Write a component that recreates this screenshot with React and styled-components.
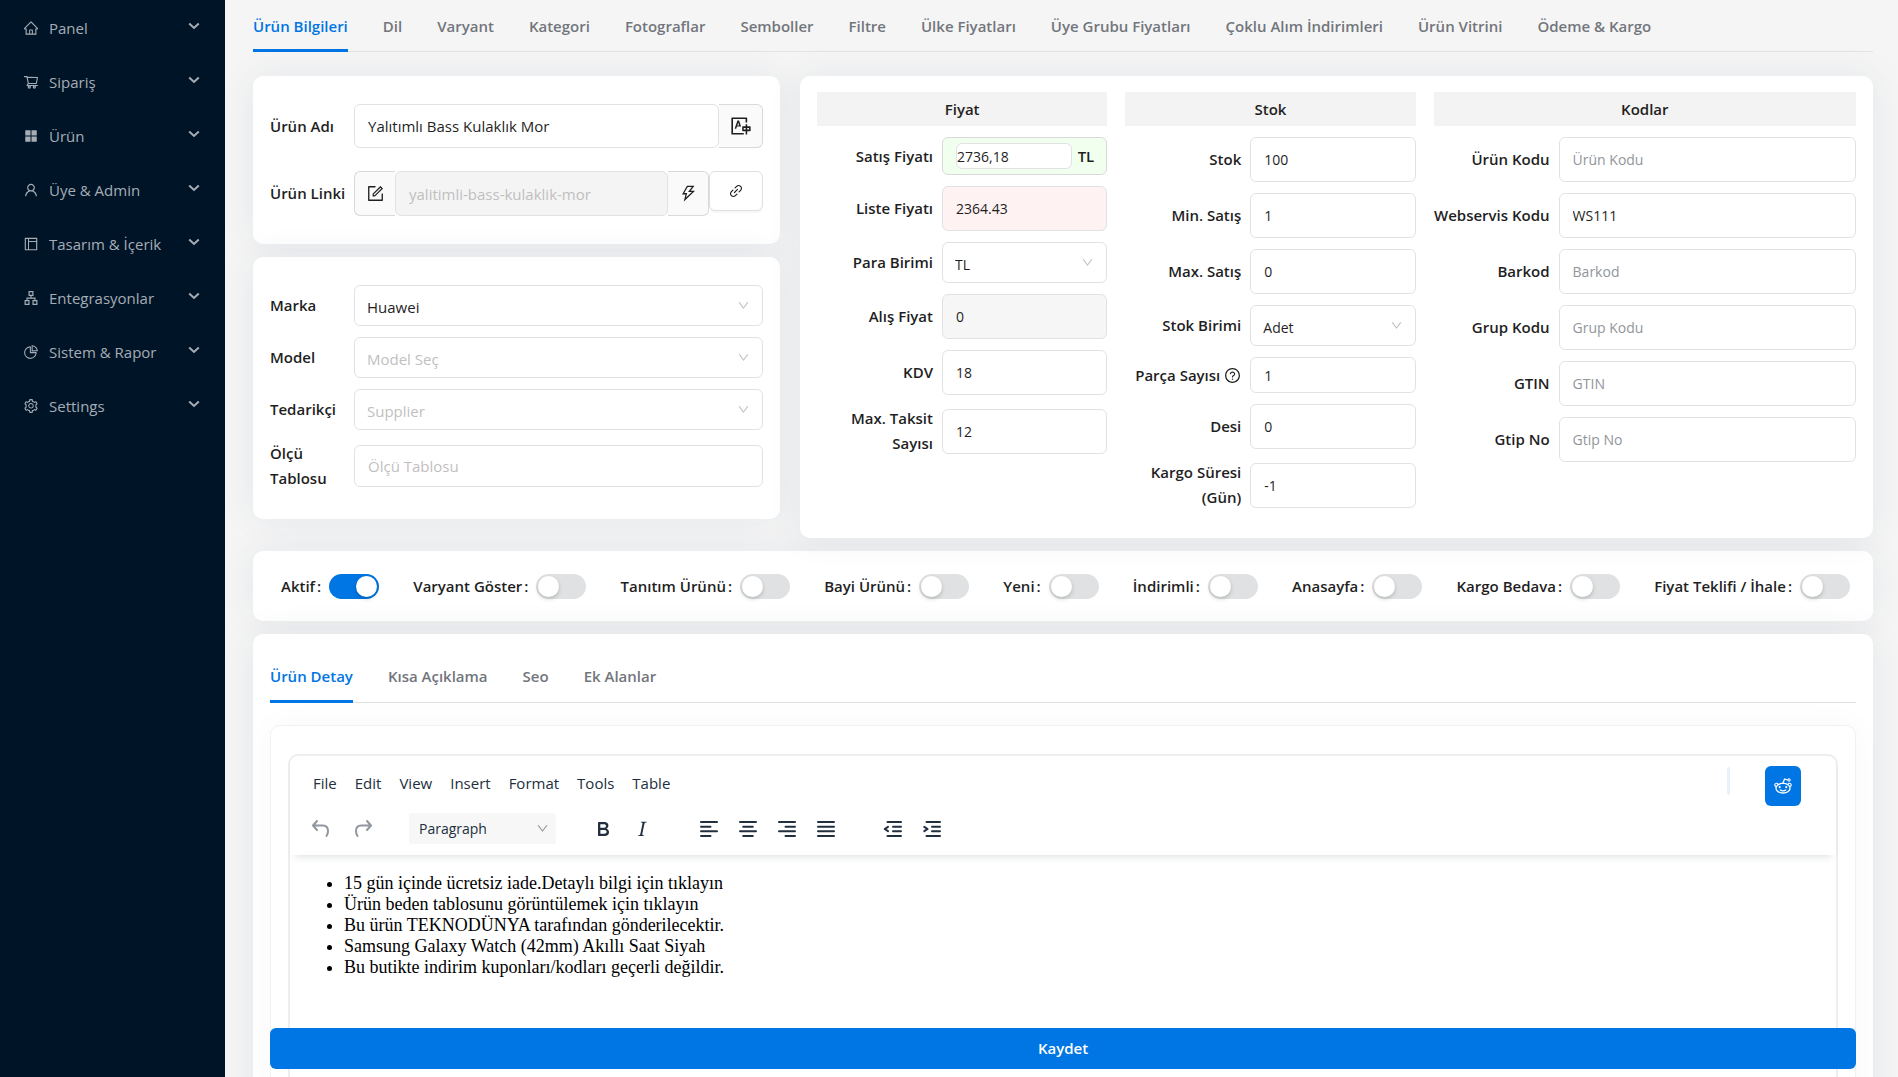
import React, { useState } from "react";
import styled, { createGlobalStyle } from "styled-components";
import {
  AiFillAppstore,
  AiOutlineApartment,
  AiOutlineForm,
  AiOutlineHome,
  AiOutlineLayout,
  AiOutlineLink,
  AiOutlinePieChart,
  AiOutlineQuestionCircle,
  AiOutlineReddit,
  AiOutlineSetting,
  AiOutlineShoppingCart,
  AiOutlineThunderbolt,
  AiOutlineTranslation,
  AiOutlineUser,
  AiOutlineDown,
} from "react-icons/ai";

const GlobalStyle = createGlobalStyle`
  * {
    box-sizing: border-box;
  }

  body {
    margin: 0;
    background: #f5f5f5;
    color: #1f1f1f;
    font-family: "Open Sans", "Noto Sans", sans-serif;
    font-size: 15px;
    line-height: 25px;
  }

  button, input, select {
    font: inherit;
    color: inherit;
    margin: 0;
  }
`

const Page = styled.div`
  display: flex;
  height: 100vh;
`

/* sidebar */

const Sidebar = styled.nav`
  flex: 0 0 225px;
  background: #001428;
`

const SidebarLink = styled.a`
  display: flex;
  align-items: center;
  height: 54px;
  padding: 2px 25px 0 23px;
  color: #a6adb4;
  text-decoration: none;

  > svg:first-child {
    margin-right: 10px;
  }
`

const SidebarText = styled.span`
  flex: 1;
`

const sidebarItems = [
  { text: 'Panel', Icon: AiOutlineHome },
  { text: 'Sipariş', Icon: AiOutlineShoppingCart },
  { text: 'Ürün', Icon: AiFillAppstore },
  { text: 'Üye & Admin', Icon: AiOutlineUser },
  { text: 'Tasarım & İçerik', Icon: AiOutlineLayout },
  { text: 'Entegrasyonlar', Icon: AiOutlineApartment },
  { text: 'Sistem & Rapor', Icon: AiOutlinePieChart },
  { text: 'Settings', Icon: AiOutlineSetting },
]

const Chevron = () => (
  <svg width="12" height="14" viewBox="0 0 12 14" fill="none" stroke="currentColor" strokeWidth="2">
    <path d="M1.2 2.500 L6 7 L10.800 2.500" />
  </svg>
)

/* page body */

const Main = styled.main`
  flex: 1;
  min-width: 0;
  overflow-y: auto;
  scrollbar-width: none;
  padding: 0 25px 0 28px;
`

const TabBar = styled.div`
  display: flex;
  gap: 35px;
  border-bottom: 1px solid #e2e3e5;
`

const TabButton = styled.button`
  height: ${({ tall }) => tall ? '69px' : '52px'};
  margin-bottom: -1px;
  padding: ${({ tall }) => tall ? '18px 0 0' : '4px 0 0'};
  border: 0;
  border-bottom: 3px solid ${({ active }) => active ? '#0075e4' : 'transparent'};
  border-radius: 2px 2px 0 0;
  background: none;
  color: ${({ active }) => active ? '#0075e4' : '#72767c'};
  font-weight: 600;
  white-space: nowrap;
  cursor: pointer;
`

const Tabs = ({ items, tall, label }) => {
  const [current, setCurrent] = useState(items[0])
  return (
    <TabBar role="tablist" aria-label={label}>
      {items.map(q => (
        <TabButton
          key={q}
          role="tab"
          type="button"
          aria-selected={q === current}
          active={q === current ? 1 : undefined}
          tall={tall}
          onClick={() => setCurrent(q)}
        >
          {q}
        </TabButton>
      ))}
    </TabBar>
  )
}

const Columns = styled.div`
  display: grid;
  grid-template-columns: 527fr 1073fr;
  gap: 20px;
  margin-top: 24px;
`

const LeftColumn = styled.div`
  display: flex;
  flex-direction: column;
  gap: 13px;
`

const Card = styled.section`
  background: #fff;
  border-radius: 10px;
  box-shadow: 0 0 34px rgba(41, 60, 100, 0.08);
`

const NameCard = styled(Card)`
  display: flex;
  flex-direction: column;
  gap: 23px;
  padding: 28px 17px;
`

const BrandCard = styled(Card)`
  display: flex;
  flex-direction: column;
  gap: 11px;
  padding: 28px 17px;
`

const LeftRow = styled.div`
  display: flex;
  align-items: center;
`

const LeftLabel = styled.label`
  flex: 0 0 84px;
  padding-right: 20px;
  font-weight: 600;
  ${({ single }) => single && 'padding-right: 0; white-space: nowrap;'}
`

const Input = styled.input`
  flex: 1;
  min-width: 0;
  width: 100%;
  height: ${({ h }) => h || 45}px;
  padding: 0 13px;
  border: 1px solid #e1e2e4;
  border-radius: 6px;
  background: ${({ tone }) => tone || '#fff'};
  outline: none;

  &::placeholder {
    color: ${({ pale }) => pale ? '#bfbfbf' : '#91959a'};
    opacity: 1;
  }

  &:disabled {
    color: #bfbfbf;
    background: #f4f4f4;
  }
`

const Addon = styled.button`
  display: flex;
  align-items: center;
  justify-content: center;
  flex: 0 0 ${({ w }) => w}px;
  height: ${({ h }) => h || 45}px;
  padding: 0;
  border: 1px solid #d9d9d9;
  background: #fafafa;
  cursor: pointer;
  ${({ side }) => side === 'left'
    ? 'border-right: 0; border-radius: 6px 0 0 6px;'
    : 'border-left: 0; border-radius: 0 6px 6px 0;'}
`

const LinkButton = styled.button`
  display: flex;
  align-items: center;
  justify-content: center;
  align-self: flex-start;
  flex: 0 0 54px;
  height: 40px;
  padding: 0;
  border: 1px solid #dedfe1;
  border-radius: 6px;
  background: #fff;
  box-shadow: 0 2px 0 rgba(0, 0, 0, 0.03);
  cursor: pointer;
`

const SelectBox = styled.div`
  display: grid;
  align-items: center;
  flex: 1;
  min-width: 0;

  > * {
    grid-area: 1 / 1;
  }

  > svg {
    justify-self: end;
    margin-right: 13px;
    color: #bfbfbf;
    pointer-events: none;
  }
`

const NativeSelect = styled.select`
  appearance: none;
  width: 100%;
  height: 41px;
  padding: 4px 12px 0;
  border: 1px solid #e1e2e4;
  border-radius: 6px;
  background: #fff;
  color: ${({ empty }) => empty ? '#bfbfbf' : '#1f1f1f'};
  outline: none;
`

const Select = ({ id, value, empty, label }) => (
  <SelectBox>
    <NativeSelect id={id} aria-label={label} empty={empty ? 1 : undefined} defaultValue={value}>
      <option>{value}</option>
    </NativeSelect>
    <AiOutlineDown size={13} />
  </SelectBox>
)

/* price, stock and code columns */

const DataCard = styled(Card)`
  display: grid;
  grid-template-columns: 7fr 7fr 10fr;
  align-items: start;
  padding: 16px 8px 28px;
`

const DataColumn = styled.div`
  display: flex;
  flex-direction: column;
  gap: 11px;
  min-width: 0;
  padding: 0 9px;

  input, select {
    font-size: 14px;
  }
`

const ColumnTitle = styled.div`
  height: 34px;
  background: #f3f3f3;
  font-weight: 600;
  line-height: 34px;
  text-align: center;
`

const DataRow = styled.div`
  display: flex;
  align-items: center;
`

const DataLabel = styled.label`
  flex: 0 0 125px;
  padding-right: 9px;
  padding-left: ${({ wraps }) => wraps ? '20px' : '0'};
  font-weight: 600;
  text-align: right;
  white-space: ${({ wraps }) => wraps ? 'normal' : 'nowrap'};

  > svg {
    margin-left: 4px;
    vertical-align: -3px;
  }
`

const PriceBox = styled.div`
  display: flex;
  align-items: center;
  gap: 6px;
  flex: 1;
  min-width: 0;
  height: 38px;
  padding: 0 12px 0 13px;
  border: 1px solid #d9d9d9;
  border-radius: 6px;
  background: #f0ffee;
  font-weight: 600;
`

const PriceInput = styled(Input)`
  height: 26px;
  padding: 0;
  font-weight: 400;
`

const priceRows = [
  { id: 'liste', text: 'Liste Fiyatı', value: '2364.43', tone: '#fff2f2' },
  { id: 'para', text: 'Para Birimi', value: 'TL', select: true },
  { id: 'alis', text: 'Alış Fiyat', value: '0', tone: '#f6f6f6' },
  { id: 'kdv', text: 'KDV', value: '18' },
  { id: 'taksit', text: 'Max. Taksit Sayısı', value: '12', wraps: true },
]

const stockRows = [
  { id: 'stok', text: 'Stok', value: '100' },
  { id: 'min', text: 'Min. Satış', value: '1' },
  { id: 'max', text: 'Max. Satış', value: '0' },
  { id: 'birim', text: 'Stok Birimi', value: 'Adet', select: true },
  { id: 'parca', text: 'Parça Sayısı', value: '1', h: 36, help: true },
  { id: 'desi', text: 'Desi', value: '0' },
  { id: 'kargo', text: 'Kargo Süresi (Gün)', value: '-1', wraps: true },
]

const codeRows = [
  { id: 'urunkodu', text: 'Ürün Kodu' },
  { id: 'wskodu', text: 'Webservis Kodu', value: 'WS111' },
  { id: 'barkod', text: 'Barkod' },
  { id: 'grup', text: 'Grup Kodu' },
  { id: 'gtin', text: 'GTIN' },
  { id: 'gtip', text: 'Gtip No' },
]

const Field = ({ id, text, value, tone, h, select, wraps, help }) => (
  <DataRow>
    <DataLabel htmlFor={id} wraps={wraps ? 1 : undefined}>
      {text}
      {help && <AiOutlineQuestionCircle size={17} />}
    </DataLabel>
    {select
      ? <Select id={id} value={value} />
      : <Input id={id} defaultValue={value} placeholder={text} tone={tone} h={h} />}
  </DataRow>
)

/* switches */

const SwitchCard = styled(Card)`
  display: flex;
  align-items: center;
  justify-content: space-between;
  height: 70px;
  margin-top: 13px;
  padding: 0 23px 0 28px;
`

const SwitchLabel = styled.label`
  display: flex;
  align-items: center;
  font-weight: 600;
  white-space: nowrap;
`

const Colon = styled.span`
  margin: 0 8px 0 2px;
`

const Switch = styled.input`
  appearance: none;
  display: flex;
  align-items: center;
  width: 50px;
  height: 25px;
  padding: 0 2px;
  border-radius: 13px;
  background: #e0e1e3;
  cursor: pointer;

  &::before {
    content: "";
    width: 21px;
    height: 21px;
    border-radius: 50%;
    background: #fff;
    box-shadow: 0 2px 4px rgba(0, 35, 11, 0.2);
  }

  &:checked {
    justify-content: flex-end;
    background: #0075e4;
  }
`

const switches = [
  'Aktif',
  'Varyant Göster',
  'Tanıtım Ürünü',
  'Bayi Ürünü',
  'Yeni',
  'İndirimli',
  'Anasayfa',
  'Kargo Bedava',
  'Fiyat Teklifi / İhale',
]

/* editor */

const DetailCard = styled(Card)`
  margin-top: 13px;
  padding: 0 17px 8px;
`

const EditorCard = styled.div`
  margin-top: 22px;
  padding: 28px 17px;
  border: 1px solid #f0f1f2;
  border-radius: 10px;
  box-shadow: 0 0 34px rgba(51, 65, 92, 0.03);
`

const Editor = styled.div`
  min-height: 420px;
  border: 2px solid #eee;
  border-radius: 10px;
`

const EditorHead = styled.div`
  display: flex;
  align-items: flex-start;
  height: 99px;
  padding: 10px 35px 0 10px;
  box-shadow: 0 6px 8px -5px rgba(34, 60, 50, 0.18);
`

const EditorBars = styled.div`
  flex: 1;
`

const MenuBar = styled.div`
  display: flex;
  height: 34px;
  align-items: center;
  padding-left: 4px;
`

const MenuButton = styled.button`
  padding: 0 9px;
  border: 0;
  background: none;
  color: #222f3e;
`

const ToolBar = styled.div`
  display: flex;
  align-items: center;
  height: 57px;
`

const ToolGroup = styled.div`
  display: flex;
  margin-right: ${({ gap }) => gap}px;
`

const Tool = styled.button`
  display: flex;
  align-items: center;
  justify-content: center;
  width: ${({ w }) => w || 39}px;
  height: 32px;
  padding: 0;
  border: 0;
  background: none;
  color: #222f3e;

  &:disabled {
    color: #90979f;
  }
`

const ParagraphBox = styled.div`
  display: flex;
  flex: 0 0 147px;
  margin-right: 27px;
  color: #222f3e;

  select {
    height: 31px;
    padding: 0 10px;
    border: 0;
    border-radius: 3px;
    background: #f7f7f7;
    color: #222f3e;
    font-size: 14px;
  }

  ${SelectBox} > svg {
    margin-right: 7px;
    color: #90979f;
  }
`

const FadedBar = styled.span`
  width: 3px;
  height: 28px;
  margin: 1px 35px 0 0;
  border-radius: 3px 0 0 3px;
  background: #e5f1fc;
`

const RedditButton = styled.button`
  display: flex;
  align-items: center;
  justify-content: center;
  width: 36px;
  height: 40px;
  padding: 0;
  border: 0;
  border-radius: 6px;
  background: #0075e4;
  color: #fff;
  cursor: pointer;
`

const EditorText = styled.ul`
  margin: 18px 0 0;
  padding-left: 54px;
  color: #000;
  font-family: "Liberation Serif", serif;
  font-size: 18px;
  line-height: 21px;
`

const SaveButton = styled.button`
  position: sticky;
  bottom: 8px;
  display: block;
  width: 100%;
  height: 41px;
  border: 0;
  border-radius: 6px;
  background: #0075e4;
  color: #fff;
  font-weight: 600;
  cursor: pointer;
`

const ToolIcon = ({ d, width = 2 }) => (
  <svg width="24" height="24" viewBox="0 0 24 24" fill="none" stroke="currentColor" strokeWidth={width} strokeLinecap="round" strokeLinejoin="round">
    <path d={d} />
  </svg>
)

const BoldIcon = () => (
  <svg width="24" height="24" viewBox="0 0 24 24" fill="currentColor">
    <path fillRule="evenodd" d="M7.8 19c-.3 0-.5 0-.6-.2l-.2-.5V5.7c0-.2 0-.4.2-.5l.6-.2h5c1.5 0 2.7.3 3.5 1 .7.6 1.1 1.4 1.1 2.5a3 3 0 0 1-.6 1.9c-.4.6-1 1-1.6 1.2.4.1.9.3 1.3.6s.8.7 1 1.2c.4.4.5 1 .5 1.6 0 1.3-.4 2.3-1.3 3-.8.7-2.1 1-3.8 1H7.8Zm5-8.3c.6 0 1.2-.1 1.6-.5.4-.3.6-.7.6-1.3 0-1.1-.8-1.7-2.3-1.7H9.3v3.5h3.4Zm.5 6c.7 0 1.3-.1 1.7-.4.4-.4.6-.9.6-1.5s-.2-1-.7-1.4c-.4-.3-1-.4-2-.4H9.4v3.8h4Z" />
  </svg>
)

const ItalicIcon = () => (
  <svg width="24" height="24" viewBox="0 0 24 24" fill="currentColor">
    <path d="m16.7 4.7-.1.9h-.3c-.6 0-1 0-1.4.3-.3.3-.4.6-.5 1.1l-2.1 9.8v.6c0 .5.4.8 1.4.8h.2l-.2.8H8l.2-.8h.2c1.1 0 1.8-.5 2-1.5l2-9.8.1-.5c0-.6-.4-.8-1.4-.8h-.3l.2-.9h5.8Z" />
  </svg>
)

const alignTools = [
  { name: 'Sola hizala', d: 'M4 5h16M4 9.700h9.500M4 14.300h16M4 19h9.500' },
  { name: 'Ortala', d: 'M4 5h16M7.200 9.700h9.600M4 14.300h16M7.200 19h9.600' },
  { name: 'Sağa hizala', d: 'M4 5h16M10.500 9.700h9.500M4 14.300h16M10.500 19h9.500' },
  { name: 'İki yana yasla', d: 'M4 5h16M4 9.700h16M4 14.300h16M4 19h16' },
]

const indentTools = [
  { name: 'Girintiyi azalt', d: 'M6.500 5h13.500M12 9.700h8M12 14.300h8M6.500 19h13.500M7 9.800l-3.300 2.200 3.300 2.200' },
  { name: 'Girintiyi artır', d: 'M6.500 5h13.500M12 9.700h8M12 14.300h8M6.500 19h13.500M4.300 9.800l3.300 2.200-3.300 2.200' },
]

const App = () => (
  <>
    <GlobalStyle />
    <Page>
      <Sidebar>
        {sidebarItems.map(({ text, Icon }) => (
          <SidebarLink key={text} href="#">
            <Icon size={16} />
            <SidebarText>{text}</SidebarText>
            <Chevron />
          </SidebarLink>
        ))}
      </Sidebar>
      <Main>
        <Tabs
          label="Ürün"
          items={['Ürün Bilgileri', 'Dil', 'Varyant', 'Kategori', 'Fotograflar', 'Semboller', 'Filtre', 'Ülke Fiyatları', 'Üye Grubu Fiyatları', 'Çoklu Alım İndirimleri', 'Ürün Vitrini', 'Ödeme & Kargo']}
        />
        <Columns>
          <LeftColumn>
            <NameCard>
              <LeftRow>
                <LeftLabel htmlFor="ad" single={1}>Ürün Adı</LeftLabel>
                <Input id="ad" h={44} defaultValue="Yalıtımlı Bass Kulaklık Mor" />
                <Addon type="button" w={44} h={44} aria-label="Çevir"><AiOutlineTranslation size={22} /></Addon>
              </LeftRow>
              <LeftRow>
                <LeftLabel htmlFor="link" single={1}>Ürün Linki</LeftLabel>
                <Addon type="button" side="left" w={41} aria-label="Düzenle"><AiOutlineForm size={19} /></Addon>
                <Input id="link" disabled defaultValue="yalitimli-bass-kulaklik-mor" />
                <Addon type="button" w={41} aria-label="Oluştur"><AiOutlineThunderbolt size={19} /></Addon>
                <LinkButton type="button" aria-label="Link"><AiOutlineLink size={16} /></LinkButton>
              </LeftRow>
            </NameCard>
            <BrandCard>
              <LeftRow>
                <LeftLabel htmlFor="marka">Marka</LeftLabel>
                <Select id="marka" value="Huawei" />
              </LeftRow>
              <LeftRow>
                <LeftLabel htmlFor="model">Model</LeftLabel>
                <Select id="model" value="Model Seç" empty />
              </LeftRow>
              <LeftRow>
                <LeftLabel htmlFor="tedarikci" single={1}>Tedarikçi</LeftLabel>
                <Select id="tedarikci" value="Supplier" empty />
              </LeftRow>
              <LeftRow>
                <LeftLabel htmlFor="olcu">Ölçü Tablosu</LeftLabel>
                <Input id="olcu" h={42} pale={1} placeholder="Ölçü Tablosu" />
              </LeftRow>
            </BrandCard>
          </LeftColumn>
          <DataCard>
            <DataColumn>
              <ColumnTitle>Fiyat</ColumnTitle>
              <DataRow>
                <DataLabel htmlFor="satis">Satış Fiyatı</DataLabel>
                <PriceBox>
                  <PriceInput id="satis" defaultValue="2736,18" />
                  TL
                </PriceBox>
              </DataRow>
              {priceRows.map(q => <Field key={q.id} {...q} />)}
            </DataColumn>
            <DataColumn>
              <ColumnTitle>Stok</ColumnTitle>
              {stockRows.map(q => <Field key={q.id} {...q} />)}
            </DataColumn>
            <DataColumn>
              <ColumnTitle>Kodlar</ColumnTitle>
              {codeRows.map(q => <Field key={q.id} {...q} />)}
            </DataColumn>
          </DataCard>
        </Columns>
        <SwitchCard>
          {switches.map((q, i) => (
            <SwitchLabel key={q}>
              {q}
              <Colon>:</Colon>
              <Switch type="checkbox" role="switch" defaultChecked={i === 0} />
            </SwitchLabel>
          ))}
        </SwitchCard>
        <DetailCard>
          <Tabs label="Detay" tall={1} items={['Ürün Detay', 'Kısa Açıklama', 'Seo', 'Ek Alanlar']} />
          <EditorCard>
            <Editor>
              <EditorHead>
                <EditorBars>
                  <MenuBar>
                    {['File', 'Edit', 'View', 'Insert', 'Format', 'Tools', 'Table'].map(q => (
                      <MenuButton key={q} type="button">{q}</MenuButton>
                    ))}
                  </MenuBar>
                  <ToolBar>
                    <ToolGroup gap={25}>
                      <Tool type="button" w={42} disabled aria-label="Geri al"><ToolIcon d="M8 4 4 8.500l4 4.500M4.500 8.500h9.500q5 0 5 5.500q0 3-1.500 5" /></Tool>
                      <Tool type="button" w={42} disabled aria-label="Yinele"><ToolIcon d="M16 4l4 4.500-4 4.500M19.500 8.500h-9.500q-5 0-5 5.500q0 3 1.500 5" /></Tool>
                    </ToolGroup>
                    <ParagraphBox>
                      <Select id="blok" label="Blok" value="Paragraph" />
                    </ParagraphBox>
                    <ToolGroup gap={28}>
                      <Tool type="button" aria-label="Kalın"><BoldIcon /></Tool>
                      <Tool type="button" aria-label="İtalik"><ItalicIcon /></Tool>
                    </ToolGroup>
                    <ToolGroup gap={28}>
                      {alignTools.map(q => (
                        <Tool key={q.name} type="button" aria-label={q.name}><ToolIcon d={q.d} /></Tool>
                      ))}
                    </ToolGroup>
                    <ToolGroup gap={0}>
                      {indentTools.map(q => (
                        <Tool key={q.name} type="button" aria-label={q.name}><ToolIcon d={q.d} /></Tool>
                      ))}
                    </ToolGroup>
                  </ToolBar>
                </EditorBars>
                <FadedBar />
                <RedditButton type="button" aria-label="Asistan"><AiOutlineReddit size={20} /></RedditButton>
              </EditorHead>
              <EditorText>
                <li>15 gün içinde ücretsiz iade.Detaylı bilgi için tıklayın</li>
                <li>Ürün beden tablosunu görüntülemek için tıklayın</li>
                <li>Bu ürün TEKNODÜNYA tarafından gönderilecektir.</li>
                <li>Samsung Galaxy Watch (42mm) Akıllı Saat Siyah</li>
                <li>Bu butikte indirim kuponları/kodları geçerli değildir.</li>
              </EditorText>
            </Editor>
          </EditorCard>
          <SaveButton type="button">Kaydet</SaveButton>
        </DetailCard>
      </Main>
    </Page>
  </>
)

export default App
